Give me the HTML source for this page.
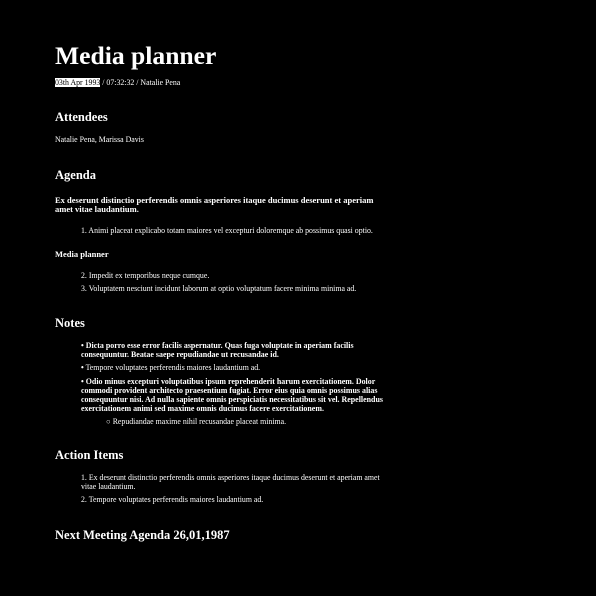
<!DOCTYPE html>
<html><head><style>
body{margin:0;background:#000;width:596px;height:596px;overflow:hidden;font-family:"Liberation Serif",serif;color:#fff;position:relative}
div{position:absolute;white-space:nowrap}
.t{font-size:7.85px;line-height:9px}
.b{font-weight:bold;font-size:8.5px}
.n{font-weight:bold;font-size:7.95px}
.h{font-size:12.5px;font-weight:bold;line-height:14px}
</style></head><body>
<div style="left:55px;top:40px;font-size:25.6px;font-weight:bold;line-height:32px">Media planner</div>
<div class="t" style="left:55px;top:78px"><span style="background:#fff;color:#000">03th Apr 1993</span> / 07:32:32 / Natalie Pena</div>
<div class="h" style="left:55px;top:110px">Attendees</div>
<div class="t" style="left:55px;top:135px">Natalie Pena, Marissa Davis</div>
<div class="h" style="left:55px;top:168px">Agenda</div>
<div class="t b" style="left:55px;top:196px">Ex deserunt distinctio perferendis omnis asperiores itaque ducimus deserunt et aperiam<br>amet vitae laudantium.</div>
<div class="t" style="left:81px;top:226px">1. Animi placeat explicabo totam maiores vel excepturi doloremque ab possimus quasi optio.</div>
<div class="t b" style="left:55px;top:250px">Media planner</div>
<div class="t" style="left:81px;top:271px">2. Impedit ex temporibus neque cumque.</div>
<div class="t" style="left:81px;top:284px">3. Voluptatem nesciunt incidunt laborum at optio voluptatum facere minima minima ad.</div>
<div class="h" style="left:55px;top:316px">Notes</div>
<div class="t n" style="left:81px;top:341px">• Dicta porro esse error facilis aspernatur. Quas fuga voluptate in aperiam facilis<br>consequuntur. Beatae saepe repudiandae ut recusandae id.</div>
<div class="t" style="left:81px;top:363px"><b>•</b> Tempore voluptates perferendis maiores laudantium ad.</div>
<div class="t n" style="left:81px;top:377px">• Odio minus excepturi voluptatibus ipsum reprehenderit harum exercitationem. Dolor<br>commodi provident architecto praesentium fugiat. Error eius quia omnis possimus alias<br>consequuntur nisi. Ad nulla sapiente omnis perspiciatis necessitatibus sit vel. Repellendus<br>exercitationem animi sed maxime omnis ducimus facere exercitationem.</div>
<div class="t" style="left:106px;top:417px">○ Repudiandae maxime nihil recusandae placeat minima.</div>
<div class="h" style="left:55px;top:448px">Action Items</div>
<div class="t" style="left:81px;top:473px">1. Ex deserunt distinctio perferendis omnis asperiores itaque ducimus deserunt et aperiam amet<br>vitae laudantium.</div>
<div class="t" style="left:81px;top:495px">2. Tempore voluptates perferendis maiores laudantium ad.</div>
<div class="h" style="left:55px;top:528px">Next Meeting Agenda 26,01,1987</div>
</body></html>
